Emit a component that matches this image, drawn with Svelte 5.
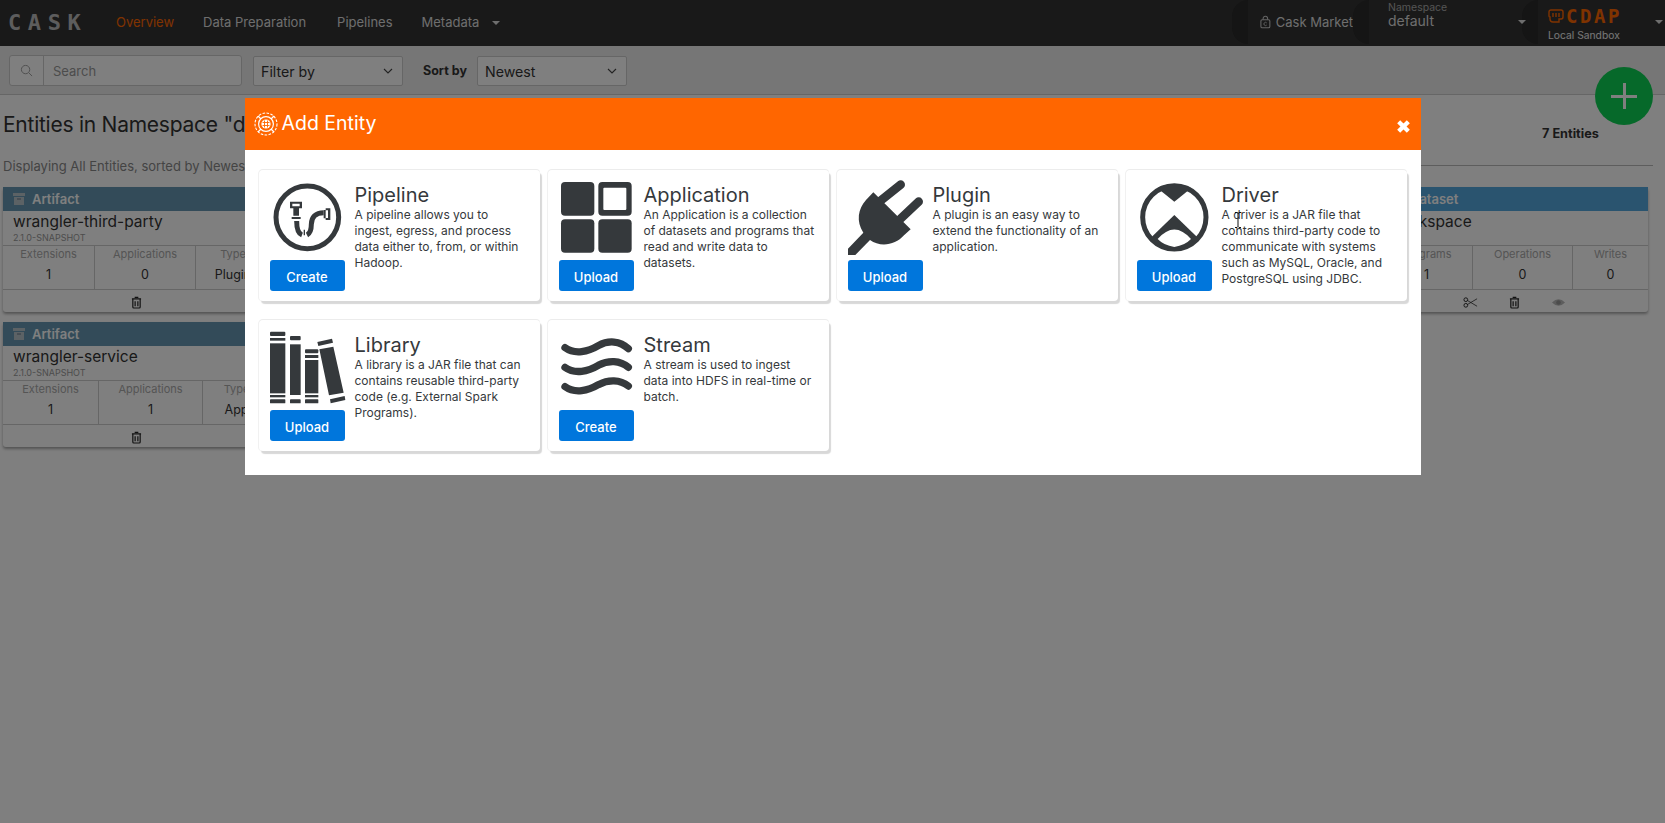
<script>
  const cards = [
    { title: 'Pipeline', action: 'Create', icon: 'pipeline', text: 'A pipeline allows you to ingest, egress, and process data either to, from, or within Hadoop.' },
    { title: 'Application', action: 'Upload', icon: 'application', text: 'An Application is a collection of datasets and programs that read and write data to datasets.' },
    { title: 'Plugin', action: 'Upload', icon: 'plugin', text: 'A plugin is an easy way to extend the functionality of an application.' },
    { title: 'Driver', action: 'Upload', icon: 'driver', text: 'A driver is a JAR file that contains third-party code to communicate with systems such as MySQL, Oracle, and PostgreSQL using JDBC.' },
    { title: 'Library', action: 'Upload', icon: 'library', text: 'A library is a JAR file that can contains reusable third-party code (e.g. External Spark Programs).' },
    { title: 'Stream', action: 'Create', icon: 'stream', text: 'A stream is used to ingest data into HDFS in real-time or batch.' }
  ];
  const left = [
    { name: 'wrangler-third-party', cols: [['Extensions', '1', 92], ['Applications', '0', 101], ['Type', 'Plugin', 74]] },
    { name: 'wrangler-service', cols: [['Extensions', '1', 96], ['Applications', '1', 104], ['Type', 'App', 67]] }
  ];
</script>

{#snippet trash()}
  <svg class="trash" viewBox="0 0 12 14"><path d="M4 1.5h4M1 3h10M2 3.5V12a1 1 0 0 0 1 1h6a1 1 0 0 0 1-1V3.5M4.5 5.5v5.5M7.5 5.5v5.5" fill="none" stroke="#222" stroke-width="1.3"/></svg>
{/snippet}

{#snippet box()}
  <svg class="box" viewBox="0 0 12 12"><path d="M0 0h12v3H0zM1 4h10v8H1z" fill="#b9c4cb"/><path d="M4 6h4" stroke="#678" stroke-width="1"/></svg>
{/snippet}

{#snippet entity(e)}
  <section class="entity">
    <header class="ehead artifact">{@render box()}<span>Artifact</span></header>
    <div class="ename">{e.name}</div>
    <div class="ever">2.1.0-SNAPSHOT</div>
    <div class="cells">
      {#each e.cols as c}
        <div class="cell" style="width:{c[2]}px"><span class="lab">{c[0]}</span><span class="val">{c[1]}</span></div>
      {/each}
    </div>
    <div class="efoot">{@render trash()}</div>
  </section>
{/snippet}

{#snippet icon(kind)}
  {#if kind === 'pipeline'}
    <svg class="ic" viewBox="75 255 225 219">
      <circle cx="187" cy="367" r="94" fill="none" stroke="#35393c" stroke-width="15"/>
      <path d="M135 320h36v20h-9v22h-17v-22h-10zM142 326v8h22v-8z" fill="#35393c" fill-rule="evenodd"/>
      <path d="M140 366h27v6h-27z" fill="#35393c"/>
      <path d="M155 378C155 400 160 416 171 420M186 420C198 414 199 400 199 388C199 366 212 353 236 353" fill="none" stroke="#35393c" stroke-width="15"/>
      <path d="M178 404v17" stroke="#35393c" stroke-width="4"/>
      <path d="M236 345h6v-5h14v35h-14v-5h-6zM242 346v23h7v-23z" fill="#35393c" fill-rule="evenodd"/>
    </svg>
  {:else if kind === 'application'}
    <svg class="ic" viewBox="42 60 225 219">
      <rect x="48" y="66" width="100" height="101" rx="12" fill="#35393c"/>
      <rect x="160" y="66" width="100" height="101" rx="12" fill="#35393c"/>
      <rect x="175" y="83" width="69" height="67" rx="3" fill="#fff"/>
      <rect x="48" y="178" width="100" height="100" rx="12" fill="#35393c"/>
      <rect x="160" y="178" width="100" height="100" rx="12" fill="#35393c"/>
    </svg>
  {:else if kind === 'plugin'}
    <svg class="ic" viewBox="54 60 225 219">
      <path d="M152 122L212 74M212 176L266 125" stroke="#35393c" stroke-width="26" stroke-linecap="round" fill="none"/>
      <path d="M130 97L242 208L222 226C196 256 150 262 120 240L76 285L54 285V266L100 218C78 184 84 146 108 120Z" fill="#35393c"/>
    </svg>
  {:else if kind === 'driver'}
    <svg class="ic" viewBox="51 60 225 219">
      <circle cx="163" cy="172" r="95" fill="none" stroke="#35393c" stroke-width="15"/>
      <path d="M112 84Q163 60 214 84L163 125Z" fill="#35393c"/>
      <path d="M163 165L232 232Q212 258 186 265L142 265Q112 258 94 232Z" fill="#35393c"/>
      <path d="M113 237Q163 180 213 237Q195 256 163 261Q131 256 113 237Z" fill="#fff"/>
    </svg>
  {:else if kind === 'library'}
    <svg class="ic" viewBox="60 60 225 219">
      <g fill="#35393c">
        <rect x="60" y="65" width="46" height="13" rx="3"/><rect x="60" y="84" width="46" height="8"/><rect x="60" y="100" width="46" height="150"/><rect x="60" y="255" width="46" height="7"/><rect x="60" y="268" width="46" height="12" rx="2"/>
        <rect x="120" y="78" width="32" height="13" rx="3"/><rect x="120" y="103" width="32" height="152"/><rect x="120" y="268" width="32" height="12" rx="2"/>
        <rect x="165" y="118" width="40" height="12" rx="3"/><rect x="165" y="135" width="40" height="9"/><rect x="165" y="150" width="40" height="100"/><rect x="165" y="255" width="40" height="7"/><rect x="165" y="268" width="40" height="12" rx="2"/>
        <path d="M202 96L246 86L249 98L205 108ZM208 118L250 110L281 248L237 256ZM240 268L284 258L286 270L242 280Z"/>
      </g>
    </svg>
  {:else}
    <svg class="ic" viewBox="42 60 225 219">
      <g fill="none" stroke="#35393c" stroke-width="22" stroke-linecap="round">
        <path d="M60 113C90 135 130 125 160 107C190 90 225 92 250 116"/>
        <path d="M60 172C90 194 130 184 160 166C190 150 225 150 250 172"/>
        <path d="M60 230C90 252 130 242 160 224C190 208 225 208 250 228"/>
      </g>
    </svg>
  {/if}
{/snippet}

<div class="page">
  <nav class="top">
    <div class="logo">CASK</div>
    <a class="active" href="#o">Overview</a>
    <a class="dp" href="#d">Data Preparation</a>
    <a class="pl" href="#p">Pipelines</a>
    <a href="#m">Metadata</a>
    <i class="caret mcaret"></i>
    <div class="spacer"></div>
    <div class="zone market">
      <svg class="lock" viewBox="0 0 12 14"><rect x="1" y="4.5" width="10" height="9" rx="1.5" fill="none" stroke="#c8c8c8" stroke-width="1.2"/><path d="M3.5 4.5V3a2.5 2.5 0 0 1 5 0v1.5" fill="none" stroke="#c8c8c8" stroke-width="1.2"/><path d="M7.5 8a1.8 1.8 0 1 0 0 2.4" fill="none" stroke="#c8c8c8"/></svg>
      <span>Cask Market</span>
    </div>
    <div class="zone ns">
      <div class="nslab">Namespace</div>
      <div class="nsval">default</div>
      <i class="caret nscaret"></i>
    </div>
    <div class="zone cdap">
      <div class="cdaplogo">
        <svg class="fist" viewBox="0 0 16 14"><path d="M3 1h10a2 2 0 0 1 2 2v5a2 2 0 0 1-2 2h-2v3H5a3 3 0 0 1-3-3V8H2a1 1 0 0 1-1-1V3a2 2 0 0 1 2-2zM5 4v4M8 4v4M11 4v4" fill="none" stroke="#ff6600" stroke-width="1.4"/></svg>
        <span>CDAP</span>
      </div>
      <div class="sandbox">Local Sandbox</div>
      <i class="caret cdapcaret"></i>
    </div>
  </nav>

  <div class="toolbar">
    <div class="search">
      <span class="sicon"><svg viewBox="0 0 14 14"><circle cx="6" cy="6" r="4.5" fill="none" stroke="#999" stroke-width="1"/><path d="M9.5 9.5L13 13" stroke="#999"/></svg></span>
      <span class="splace">Search</span>
    </div>
    <div class="select filter"><span>Filter by</span><svg viewBox="0 0 10 6"><path d="M1 1l4 4 4-4" fill="none" stroke="#444" stroke-width="1.1"/></svg></div>
    <b class="sortlab">Sort by</b>
    <div class="select sort"><span>Newest</span><svg viewBox="0 0 10 6"><path d="M1 1l4 4 4-4" fill="none" stroke="#444" stroke-width="1.1"/></svg></div>
  </div>

  <div class="content">
    <div class="heading">
      <div class="hleft">
        <h1>Entities in Namespace "default"</h1>
        <p>Displaying All Entities, sorted by Newest</p>
      </div>
      <div class="hright"><b>7 Entities</b></div>
    </div>
    <div class="grid">
      <div class="col">
        {#each left as e}{@render entity(e)}{/each}
      </div>
      <section class="entity">
        <header class="ehead dataset">{@render box()}<span>Dataset</span></header>
        <div class="ename">workspace</div>
        <div class="ever">&nbsp;</div>
        <div class="cells">
          <div class="cell" style="width:92px"><span class="lab">Programs</span><span class="val">1</span></div>
          <div class="cell" style="width:100px"><span class="lab">Operations</span><span class="val">0</span></div>
          <div class="cell" style="width:75px"><span class="lab">Writes</span><span class="val">0</span></div>
        </div>
        <div class="efoot acts">
          <svg class="trash wide" viewBox="0 0 16 12"><circle cx="3" cy="3" r="2" fill="none" stroke="#222"/><circle cx="3" cy="9" r="2" fill="none" stroke="#222"/><path d="M5 4l10 6M5 8l10-6" stroke="#222" stroke-width=".8"/></svg>
          {@render trash()}
          <svg class="trash wide" viewBox="0 0 16 12"><path d="M1 6q7-7 14 0q-7 7-14 0z" fill="#bbb"/><circle cx="8" cy="6" r="2.5" fill="#999"/></svg>
        </div>
      </section>
    </div>
  </div>
  <div class="fab"><i></i><i></i></div>
</div>

<div class="overlay">
  <div class="modal">
    <header class="mhead">
      <svg class="mlogo" viewBox="0 0 24 24">
        <circle cx="12" cy="12" r="11" fill="none" stroke="#fff" stroke-width="1.1" stroke-dasharray="2.6 1.4"/>
        <circle cx="12" cy="12" r="7.4" fill="none" stroke="#fff" stroke-width="1.2"/>
        <circle cx="12" cy="12" r="4.6" fill="#fff"/>
        <path d="M8.5 10.5h7M8.5 13.5h7M10.5 8.5v7M13.5 8.5v7" stroke="#ff6600" stroke-width=".9"/>
        <path d="M4 4l3 3M20 4l-3 3M4 20l3-3M20 20l-3-3" stroke="#fff" stroke-width="1.3"/>
      </svg>
      <span class="mtitle">Add Entity</span>
      <svg class="mclose" viewBox="0 0 14 14"><path d="M2.5 2.5l9 9M11.5 2.5l-9 9" stroke="#fff" stroke-width="4"/></svg>
    </header>
    <div class="mbody">
      {#each cards as c}
        <article class="card">
          <div class="cleft">
            {@render icon(c.icon)}
            <button class="btn">{c.action}</button>
          </div>
          <div class="cright">
            <h3>{c.title}</h3>
            <p>{c.text}</p>
          </div>
        </article>
      {/each}
    </div>
  </div>
  <svg class="cursor" viewBox="0 0 8 16"><path d="M1 .5h2l1 1 1-1h2M4 1.5v13M1 15.5h2l1-1 1 1h2" fill="none" stroke="#111" stroke-width="1"/></svg>
</div>

<style>
  :global(body) { margin: 0; background: #fff; font-family: Inter, "Liberation Sans", sans-serif; color: #333; overflow: hidden; }
  .page { position: relative; isolation: isolate; height: 823px; overflow: hidden; }
  a { text-decoration: none; color: #ddd; font-size: 13px; margin: 0 30px 2px 0; }
  a.active { color: #ff6600; margin-right: 29px; }
  a.dp { margin-right: 31px; }
  a.pl { margin-right: 29px; }
  .top { height: 46px; background: #333; display: flex; align-items: center; padding-left: 8px; }
  .logo { font-family: "DejaVu Sans Mono", monospace; font-weight: 700; font-size: 22px; letter-spacing: 6.6px; color: #bbb; width: 108px; margin-bottom: 2px; }
  .caret { display: block; width: 0; height: 0; border: 4px solid transparent; border-top: 4px solid #ddd; border-bottom: 0; }
  .mcaret { margin-left: -17px; }
  .spacer { flex: 1; }
  .zone { position: relative; flex: none; height: 46px; box-sizing: border-box; background: #333; }
  .zone::before { content: ""; position: absolute; left: 0; top: 0; width: 16px; height: 44px; background: #2a2a2a; border-radius: 16px 0 0 16px; }
  .market { width: 121px; padding-left: 28px; display: flex; align-items: center; font-size: 13px; color: #ddd; gap: 5px; white-space: nowrap; }
  .market span { margin-bottom: 2px; }
  .lock { width: 11px; height: 14px; margin-bottom: 2px; }
  .ns { width: 169px; padding-left: 35px; }
  .nslab { font-size: 10.5px; color: #aaa; line-height: 11px; padding-top: 2px; }
  .nsval { font-size: 14px; color: #ddd; line-height: 16px; }
  .nscaret { position: absolute; left: 165px; top: 20px; z-index: 2; }
  .cdap { width: 143px; padding-left: 26px; }
  .cdaplogo { display: flex; align-items: center; gap: 2px; height: 28px; color: #ff6600; font-family: "DejaVu Sans Mono", monospace; font-weight: 700; font-size: 19px; letter-spacing: 2.6px; padding-top: 4px; box-sizing: border-box; }
  .fist { width: 16px; height: 14px; }
  .sandbox { font-size: 10.3px; color: #eee; line-height: 14px; }
  .cdapcaret { position: absolute; left: 133px; top: 20px; }

  .toolbar { height: 49px; box-sizing: border-box; background: #ececec; border-bottom: 1px solid #ccc; display: flex; align-items: center; padding: 1px 0 0 9px; }
  .search { width: 233px; height: 31px; box-sizing: border-box; display: flex; background: #fff; border: 1px solid #ccc; border-radius: 3px; }
  .sicon { width: 33px; border-right: 1px solid #ccc; display: flex; align-items: center; justify-content: center; }
  .sicon svg { width: 13px; height: 13px; }
  .splace { font-size: 13px; color: #999; line-height: 31px; padding-left: 9px; }
  .select { height: 30px; width: 150px; box-sizing: border-box; background: #fff; border: 1px solid #ccc; border-radius: 2px; font-size: 14.2px; color: #333; display: flex; align-items: center; justify-content: space-between; padding: 1px 9px 0 7px; }
  .select svg { width: 10px; height: 6px; }
  .filter { margin-left: 11px; }
  .sortlab { font-size: 12.5px; margin-left: 20px; width: 54px; color: #333; }

  .content { position: relative; }
  .heading { display: flex; justify-content: space-between; height: 92px; box-sizing: border-box; }
  .hleft { padding-left: 3px; }
  h1 { margin: 0; font-weight: 400; font-size: 21px; letter-spacing: -.25px; line-height: 28px; padding-top: 16px; color: #333; white-space: nowrap; }
  .hleft p { margin: 19px 0 0; font-size: 13px; line-height: 16px; color: #888; white-space: nowrap; }
  .hright { width: 240px; height: 71px; margin-right: 12px; box-sizing: border-box; border-bottom: 1px solid #bbb; padding: 31px 0 0 129px; font-size: 12.7px; color: #333; }
  .grid { display: flex; justify-content: space-between; padding: 0 17px 0 3px; }
  .col { display: flex; flex-direction: column; gap: 10px; }
  .entity { width: 267px; height: 125px; background: #fff; box-shadow: 0 2px 3px rgba(0,0,0,.35); border-radius: 3px; }
  .ehead { height: 24px; display: flex; align-items: center; gap: 7px; padding-left: 10px; font-size: 13px; font-weight: 600; color: #fff; }
  .artifact { background: #6697b2; }
  .dataset { background: #55a8de; }
  .box { width: 12px; height: 12px; }
  .ename { font-size: 15.5px; line-height: 20px; padding: 1px 0 0 10px; color: #333; white-space: nowrap; }
  .ever { font-size: 9px; line-height: 12px; color: #999; padding-left: 10px; height: 13px; }
  .cells { display: flex; height: 43px; border-top: 1px solid #ccc; border-bottom: 1px solid #ccc; }
  .cell { box-sizing: border-box; border-right: 1px solid #ccc; display: flex; flex-direction: column; align-items: center; }
  .cell:last-child { border-right: 0; }
  .lab { font-size: 11px; line-height: 16px; color: #aaa; }
  .val { font-size: 12.5px; line-height: 26px; color: #333; }
  .efoot { height: 24px; display: flex; align-items: center; justify-content: center; }
  .acts { gap: 31px; }
  .trash { width: 11px; height: 13px; }
  .wide { width: 15px; }
  .fab { position: absolute; left: 1595px; top: 67px; width: 58px; height: 58px; border-radius: 50%; background: #0dd254; }
  .fab i { position: absolute; background: #fff; }
  .fab i:first-child { left: 16px; top: 28px; width: 26px; height: 3px; }
  .fab i:last-child { left: 28px; top: 16px; width: 3px; height: 26px; }

  .overlay { position: fixed; inset: 0; background: rgba(0,0,0,.5); }
  .modal { width: 1176px; margin: 98px auto 0; background: #fff; height: 377px; }
  .mhead { height: 52px; background: #ff6600; display: flex; align-items: center; color: #fff; padding-left: 9px; box-sizing: border-box; position: relative; }
  .mlogo { width: 24px; height: 24px; margin-right: 3px; }
  .mtitle { font-size: 19.5px; margin: 0 0 2px 1px; }
  .mclose { position: absolute; right: 10px; top: 21px; width: 15px; height: 15px; }
  .mbody { display: grid; grid-template-columns: repeat(4, 281px); gap: 19px 8px; padding: 20px 14px; }
  .card { height: 131px; box-sizing: border-box; padding: 10px 11px 0; border-radius: 4px; background: #fff; display: flex; gap: 10px; box-shadow: 2px 3px 1px #d8d8d8, 0 -1px 0 #ececec, -1px 0 0 #f1f1f1; }
  .cleft { width: 75px; flex: none; display: flex; flex-direction: column; gap: 7px; }
  .ic { width: 75px; height: 73px; display: block; overflow: visible; }
  .btn { width: 75px; height: 31px; border: 0; border-radius: 3px; background: #0076dc; color: #fff; font: 500 13px Inter, sans-serif; padding: 2px 0 0; }
  .cright { min-width: 0; }
  h3 { margin: 3px 0 0; font-weight: 400; font-size: 20px; line-height: 24px; color: #35393c; }
  .cright p { margin: 0; font-size: 12px; line-height: 16px; color: #35393c; }
  .cursor { position: fixed; left: 1234px; top: 212px; width: 8px; height: 16px; }
</style>
